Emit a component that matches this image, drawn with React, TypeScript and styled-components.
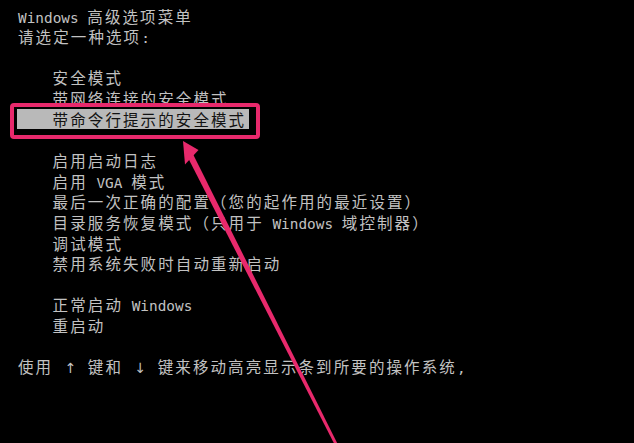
import React from "react";
import styled, { createGlobalStyle } from "styled-components";

const CELL = 8.65;
const PINK = "#e8296c";

const GlobalStyle = createGlobalStyle`
  html, body {
    margin: 0;
    padding: 0;
    background: #000;
  }
  #root {
    width: 634px;
    height: 443px;
    overflow: hidden;
  }
`;

const Screen = styled.main`
  position: relative;
  width: 634px;
  height: 443px;
  box-sizing: border-box;
  padding: 5.5px 0 0 18px;
  background: #000;
  color: #c2c2c2;
  font-family: "Noto Sans CJK SC", "Noto Sans", sans-serif;
  font-size: 15.5px;
  letter-spacing: 2.1px;
`;

const Line = styled.div<{ $indent?: boolean; $selected?: boolean }>`
  position: relative;
  box-sizing: border-box;
  height: 20.65px;
  line-height: 20.65px;
  white-space: pre;
  padding-left: ${(p) => (p.$indent ? CELL * 4 : 0)}px;
  ${(p) =>
    p.$selected &&
    `
    width: 232px;
    margin-left: -1px;
    padding-left: ${CELL * 4 + 1}px;
    background: #b9b9b9;
    color: #121212;
    &::after {
      content: "";
      position: absolute;
      top: -6px;
      left: -7px;
      right: -11px;
      bottom: -10px;
      border: 4px solid ${PINK};
      border-radius: 4px;
    }
  `}
`;

const Lat = styled.span`
  font-family: "DejaVu Sans Mono", "Liberation Mono", monospace;
  font-size: 14.4px;
  letter-spacing: 0;
`;

const Key = styled.span`
  display: inline-block;
  width: ${CELL * 2}px;
  text-align: center;
  font-family: "DejaVu Sans", sans-serif;
  font-size: 14px;
  letter-spacing: 0;
`;

const Arrow = styled.svg`
  position: absolute;
  left: 0;
  top: 0;
  pointer-events: none;
`;

export default function App() {
  return (
    <>
      <GlobalStyle />
      <Screen>
        <Line>
          <Lat>Windows </Lat>高级选项菜单
        </Line>
        <Line>
          请选定一种选项<Lat>:</Lat>
        </Line>
        <Line />
        <Line $indent>安全模式</Line>
        <Line $indent>带网络连接的安全模式</Line>
        <Line $indent $selected>带命令行提示的安全模式</Line>
        <Line />
        <Line $indent>启用启动日志</Line>
        <Line $indent>
          启用<Lat> VGA </Lat>模式
        </Line>
        <Line $indent>最后一次正确的配置（您的起作用的最近设置）</Line>
        <Line $indent>
          目录服务恢复模式（只用于<Lat> Windows </Lat>域控制器）
        </Line>
        <Line $indent>调试模式</Line>
        <Line $indent>禁用系统失败时自动重新启动</Line>
        <Line />
        <Line $indent>
          正常启动<Lat> Windows</Lat>
        </Line>
        <Line $indent>重启动</Line>
        <Line />
        <Line>
          使用<Lat> </Lat>
          <Key>↑</Key>
          <Lat> </Lat>键和<Lat> </Lat>
          <Key>↓</Key>
          <Lat> </Lat>键来移动高亮显示条到所要的操作系统<Lat>,</Lat>
        </Line>

        <Arrow width="634" height="443" viewBox="0 0 634 443">
          <polygon
            points="191.7,151.6 186.3,154.4 335.7,446.7 338.3,445.3"
            fill={PINK}
          />
          <polygon points="183,141 198.5,150 185,164.5" fill={PINK} />
        </Arrow>
      </Screen>
    </>
  );
}
